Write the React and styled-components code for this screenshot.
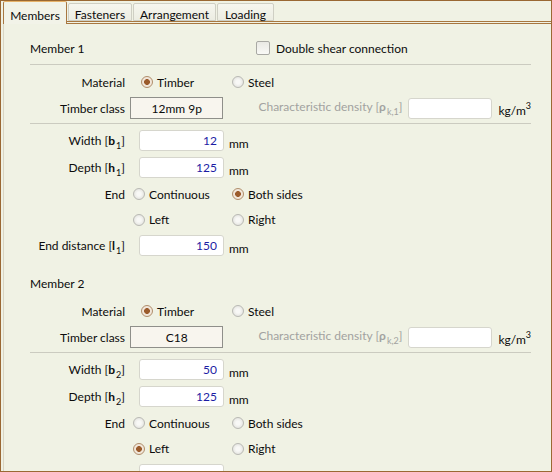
import React from "react";
import styled, { createGlobalStyle } from "styled-components";

const GlobalStyle = createGlobalStyle`
  html, body {
    margin: 0;
    padding: 0;
    background: #f0f2e4;
  }
  body {
    font-family: Lato, "Liberation Sans", sans-serif;
    font-size: 12px;
    color: #0c0c0c;
  }
`;

const Window = styled.div`
  width: 552px;
  height: 472px;
  box-sizing: border-box;
  border: 1px solid #9a6833;
  background: #f0f2e4;
  overflow: hidden;
  display: flex;
  flex-direction: column;
`;

const TabBar = styled.div`
  display: flex;
  align-items: flex-end;
  height: 23px;
  padding-left: 2px;
  position: relative;
  z-index: 1;
`;

const Tab = styled.div`
  box-sizing: border-box;
  width: ${(p) => p.$w}px;
  height: ${(p) => (p.$active ? 23 : 18)}px;
  margin-left: ${(p) => (p.$first ? 0 : 1)}px;
  margin-bottom: ${(p) => (p.$active ? -3 : 0)}px;
  display: flex;
  justify-content: center;
  align-items: flex-start;
  padding-top: ${(p) => (p.$active ? 6 : 3)}px;
  border: 1px solid ${(p) => (p.$active ? "#a87741" : "#cfcfc4")};
  border-top-color: ${(p) => (p.$active ? "#e6b269" : "#cfcfc4")};
  border-bottom: ${(p) => (p.$active ? "none" : "1px solid #cfcfc4")};
  border-radius: 2px 2px 0 0;
  background: ${(p) =>
    p.$active ? "#f2f3e8" : "linear-gradient(#f6f6ef, #ecede2)"};
  white-space: nowrap;
`;

const Pane = styled.div`
  flex: 1;
  margin-left: 2px;
  border-top: 3px double #a8773f;
  border-left: 1px solid #d9d5c3;
  padding: 10px 20px 0 26px;
`;

const Section = styled.div`
  margin-top: ${(p) => p.$mt || 0}px;
`;

const Header = styled.div`
  display: flex;
  align-items: center;
  height: 28px;
`;

const Title = styled.div`
  width: 226px;
`;

const Check = styled.span`
  box-sizing: border-box;
  width: 14px;
  height: 14px;
  border: 1px solid #a9a9a4;
  border-radius: 2px;
  background: linear-gradient(#e9e9e4, #f9f9f6);
  margin-right: 6px;
`;

const Rule = styled.div`
  height: 1px;
  background: #cbcbc0;
  margin-top: ${(p) => p.$mt || 0}px;
`;

const Row = styled.div`
  display: flex;
  align-items: center;
  height: ${(p) => p.$h}px;
  margin-top: ${(p) => p.$mt || 0}px;
`;

const Label = styled.div`
  width: 95px;
  flex-shrink: 0;
  text-align: right;
  white-space: nowrap;
  b {
    font-weight: 700;
  }
`;

const Sub = styled.span`
  font-size: 9px;
  position: relative;
  top: 4px;
  margin-left: 1px;
`;

const Options = styled.div`
  display: flex;
  align-items: center;
  margin-left: ${(p) => p.$ml}px;
`;

const Option = styled.div`
  display: flex;
  align-items: center;
  gap: 4px;
  width: ${(p) => p.$w}px;
`;

const Radio = styled.span`
  box-sizing: border-box;
  width: 12px;
  height: 12px;
  border-radius: 50%;
  border: 1px solid ${(p) => (p.$on ? "#b08e6c" : "#b9b9b4")};
  background: ${(p) =>
    p.$on
      ? "radial-gradient(circle, #9b5b2b 0 2.6px, #f1e6d9 3.2px)"
      : "radial-gradient(circle, #f8f8f6 0 2px, #e1e1dc 6px)"};
`;

const ClassBox = styled.div`
  box-sizing: border-box;
  width: 94px;
  height: 22px;
  margin-left: 5px;
  border: 1px solid #8f8f8a;
  background: #f8f5ee;
  display: flex;
  align-items: center;
  justify-content: center;
`;

const Muted = styled.div`
  margin-left: 35px;
  color: #a2a2a0;
  white-space: nowrap;
  margin-top: -3px;
`;

const Field = styled.input`
  box-sizing: border-box;
  width: ${(p) => p.$w || 85}px;
  height: 21px;
  margin: 0 0 0 ${(p) => p.$ml}px;
  padding: 0 6px 0 0;
  border: 1px solid #d6d6cd;
  border-radius: 3px;
  background: #ffffff;
  font: inherit;
  color: #1c1ca4;
  text-align: right;
  outline: none;
`;

const Unit = styled.div`
  margin-left: ${(p) => p.$ml || 5}px;
  padding-top: 5px;
  white-space: nowrap;
  sup {
    font-size: 9px;
    position: relative;
    top: -3px;
    vertical-align: top;
  }
`;

const tabs = [
  { name: "Members", w: 64 },
  { name: "Fasteners", w: 64 },
  { name: "Arrangement", w: 83 },
  { name: "Loading", w: 57 },
];

function Material({ n, timberClass, mt }) {
  return (
    <>
      <Row $h={24} $mt={mt}>
        <Label>Material</Label>
        <Options $ml={16}>
          <Option $w={91}>
            <Radio $on />
            Timber
          </Option>
          <Option $w={80}>
            <Radio />
            Steel
          </Option>
        </Options>
      </Row>
      <Row $h={24} $mt={2}>
        <Label>Timber class</Label>
        <ClassBox>{timberClass}</ClassBox>
        <Muted>
          Characteristic density [<b>ρ</b>
          <Sub>k,{n}</Sub>]
        </Muted>
        <Field $ml={6} $w={84} readOnly defaultValue="" />
        <Unit $ml={6}>
          kg/m<sup>3</sup>
        </Unit>
      </Row>
    </>
  );
}

function Geometry({ n, width, depth, end, distance, cut }) {
  const ends = ["Continuous", "Both sides", "Left", "Right"];
  return (
    <>
      <Row $h={27} $mt={3}>
        <Label>
          Width [<b>b</b>
          <Sub>{n}</Sub>]
        </Label>
        <Field $ml={14} readOnly defaultValue={width} />
        <Unit>mm</Unit>
      </Row>
      <Row $h={27}>
        <Label>
          Depth [<b>h</b>
          <Sub>{n}</Sub>]
        </Label>
        <Field $ml={14} readOnly defaultValue={depth} />
        <Unit>mm</Unit>
      </Row>
      <Row $h={26}>
        <Label>End</Label>
        <Options $ml={8}>
          {ends.slice(0, 2).map((e) => (
            <Option key={e} $w={99}>
              <Radio $on={e === end} />
              {e}
            </Option>
          ))}
        </Options>
      </Row>
      <Row $h={25}>
        <Label />
        <Options $ml={8}>
          {ends.slice(2).map((e) => (
            <Option key={e} $w={99}>
              <Radio $on={e === end} />
              {e}
            </Option>
          ))}
        </Options>
      </Row>
      {cut ? (
        <Row $h={27}>
          <Label />
          <Field $ml={14} readOnly defaultValue="" />
        </Row>
      ) : (
        <Row $h={27}>
          <Label>
            End distance [<b>l</b>
            <Sub>{n}</Sub>]
          </Label>
          <Field $ml={14} readOnly defaultValue={distance} />
          <Unit>mm</Unit>
        </Row>
      )}
    </>
  );
}

export default function App() {
  return (
    <>
      <GlobalStyle />
      <Window>
        <TabBar>
          {tabs.map((t, i) => (
            <Tab key={t.name} $w={t.w} $first={i === 0} $active={i === 0}>
              {t.name}
            </Tab>
          ))}
        </TabBar>
        <Pane>
          <Section>
            <Header>
              <Title>Member 1</Title>
              <Check />
              Double shear connection
            </Header>
            <Rule $mt={2} />
            <Material n={1} timberClass="12mm 9p" mt={5} />
            <Rule $mt={3} />
            <Geometry n={1} width="12" depth="125" end="Both sides" distance="150" />
          </Section>
          <Section $mt={10}>
            <Header>
              <Title>Member 2</Title>
            </Header>
            <Material n={2} timberClass="C18" mt={2} />
            <Rule $mt={3} />
            <Geometry n={2} width="50" depth="125" end="Left" cut />
          </Section>
        </Pane>
      </Window>
    </>
  );
}
